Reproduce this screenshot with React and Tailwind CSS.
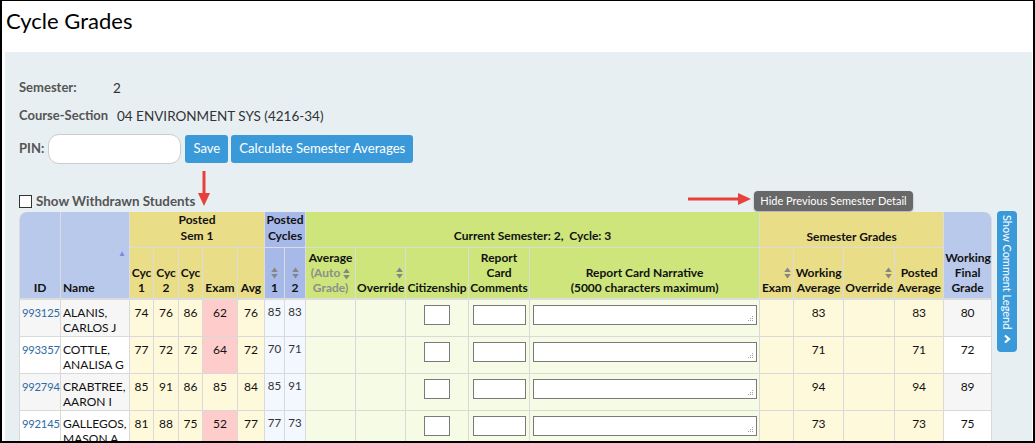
import React from 'react'

const rows = [
  { id: '993125', name: ['ALANIS,', 'CARLOS J'], sem: [74, 76, 86], exam: 62, low: true, avg: 76, p: [85, 83], wavg: 83, pavg: 83, wfg: 80 },
  { id: '993357', name: ['COTTLE,', 'ANALISA G'], sem: [77, 72, 72], exam: 64, low: true, avg: 72, p: [70, 71], wavg: 71, pavg: 71, wfg: 72 },
  { id: '992794', name: ['CRABTREE,', 'AARON I'], sem: [85, 91, 86], exam: 85, low: false, avg: 84, p: [85, 91], wavg: 94, pavg: 94, wfg: 89 },
  { id: '992145', name: ['GALLEGOS,', 'MASON A'], sem: [81, 88, 75], exam: 52, low: true, avg: 77, p: [77, 73], wavg: 73, pavg: 73, wfg: 75 },
]

const Sort = () => (
  <svg width="7" height="12" viewBox="0 0 7 12" className="inline-block">
    <path d="M3.5 0.5L6.8 5H0.2z M3.5 11.5L0.2 7H6.8z" fill="#868686" />
  </svg>
)

const Grip = () => (
  <svg width="7" height="7" viewBox="0 0 7 7" className="absolute right-[2px] bottom-[2px]">
    <g fill="#a0a0a0">
      <rect x="5" y="1" width="1" height="1" />
      <rect x="3" y="3" width="1" height="1" />
      <rect x="5" y="3" width="1" height="1" />
      <rect x="1" y="5" width="1" height="1" />
      <rect x="3" y="5" width="1" height="1" />
      <rect x="5" y="5" width="1" height="1" />
    </g>
  </svg>
)

const th = 'border-r border-b border-[#dcdcdc] font-bold text-[12px] leading-[15px] text-[#111] align-bottom px-[1px] pb-[3px]'
// base cell without font size / colour so each cell can set its own
const cell = 'border-r border-b border-[#d9d9d9] align-top leading-[15px]'
const td = `${cell} pt-[5px] text-[12px] text-[#111]`

export default function App() {
  return (
    <div className="relative w-[1035px] h-[443px] overflow-hidden border-t border-l-2 border-r-2 border-b-2 border-black bg-white font-['Lato',sans-serif]">
      <div className="h-[51px] px-[4px] pt-[6px]">
        <h1 className="text-[22px] leading-[28px] text-black">Cycle Grades</h1>
      </div>

      <div className="ml-[3px] mr-[1px] h-full bg-[#e7eff2] pl-[14px] pt-[26px]">
        <div className="flex h-[20px] items-center">
          <span className="w-[94px] text-[13px] font-bold text-[#555]">Semester:</span>
          <span className="text-[13.5px] text-[#333]">2</span>
        </div>
        <div className="mt-[8px] flex h-[20px] items-center">
          <span className="w-[98px] text-[13px] font-bold text-[#555]">Course-Section</span>
          <span className="text-[13.5px] text-[#333]">04 ENVIRONMENT SYS (4216-34)</span>
        </div>
        <div className="mt-[8px] flex items-center">
          <span className="text-[13px] font-bold text-[#555]">PIN:</span>
          <div className="ml-[4px] h-[30px] w-[133px] rounded-[11px] border border-[#ccc] bg-white" />
          <button className="ml-[4px] h-[28px] w-[43px] rounded-[3px] bg-[#3a9ad9] text-[13px] text-white">Save</button>
          <button className="ml-[3px] h-[28px] w-[182px] rounded-[3px] bg-[#3a9ad9] text-[13.2px] text-white">Calculate Semester Averages</button>
        </div>

        <div className="mt-[27px] flex h-[21px] w-[973px] items-start">
          <div className="mt-[3px] flex items-center">
            <span className="h-[13px] w-[13px] border border-[#333] bg-white" />
            <span className="ml-[4px] text-[13.4px] leading-[14px] font-bold text-[#555]">Show Withdrawn Students</span>
          </div>
          <button className="ml-auto mr-[79px] h-[20px] w-[159px] rounded-[4px] bg-[#686868] text-[11px] text-white shadow-[0_1px_2px_rgba(0,0,0,0.3)]">
            Hide Previous Semester Detail
          </button>
        </div>

        <div className="flex items-start">
          <table className="w-[973px] table-fixed border-separate border-spacing-0">
            <colgroup>
              <col className="w-[42px]" />
              <col className="w-[69px]" />
              <col className="w-[24px]" />
              <col className="w-[25px]" />
              <col className="w-[24px]" />
              <col className="w-[35px]" />
              <col className="w-[27px]" />
              <col className="w-[20px]" />
              <col className="w-[21px]" />
              <col className="w-[50px]" />
              <col className="w-[50px]" />
              <col className="w-[63px]" />
              <col className="w-[61px]" />
              <col className="w-[230px]" />
              <col className="w-[34px]" />
              <col className="w-[50px]" />
              <col className="w-[51px]" />
              <col className="w-[49px]" />
              <col className="w-[48px]" />
            </colgroup>
            <thead>
              <tr className="h-[36px]">
                <th rowSpan={2} className={`${th} border-l rounded-tl-[8px] bg-[#b9c9ec] text-center border-b-2`}>ID</th>
                <th rowSpan={2} className={`${th} relative bg-[#b9c9ec] text-left pl-[2px] border-b-2`}>
                  Name
                  <span className="absolute right-[3px] top-[37px] text-[8px] leading-[8px] text-[#7c88e0]">▲</span>
                </th>
                <th colSpan={5} className={`${th} bg-[#eadd88] text-center leading-[16px]`}>Posted<br />Sem 1</th>
                <th colSpan={2} className={`${th} bg-[#a6b9e8] text-center leading-[16px]`}>Posted<br />Cycles</th>
                <th colSpan={5} className={`${th} bg-[#cde57b] text-center pb-[4px]`}>Current Semester: 2,&nbsp; Cycle: 3</th>
                <th colSpan={4} className={`${th} bg-[#eadd88] text-center pb-[3px]`}>Semester Grades</th>
                <th rowSpan={2} className={`${th} rounded-tr-[8px] bg-[#b9c9ec] text-center border-b-2`}>Working<br />Final<br />Grade</th>
              </tr>
              <tr className="h-[52px]">
                <th className={`${th} bg-[#eadd88] text-center border-b-2`}>Cyc<br />1</th>
                <th className={`${th} bg-[#eadd88] text-center border-b-2`}>Cyc<br />2</th>
                <th className={`${th} bg-[#eadd88] text-center border-b-2`}>Cyc<br />3</th>
                <th className={`${th} bg-[#eadd88] text-center border-b-2`}>Exam</th>
                <th className={`${th} bg-[#eadd88] text-center border-b-2`}>Avg</th>
                <th className={`${th} bg-[#a6b9e8] text-center border-b-2`}>
                  <div className="flex h-[15px] items-center justify-center"><Sort /></div>1
                </th>
                <th className={`${th} bg-[#a6b9e8] text-center border-b-2`}>
                  <div className="flex h-[15px] items-center justify-center"><Sort /></div>2
                </th>
                <th className={`${th} bg-[#cde57b] text-center border-b-2`}>
                  Average<br />
                  <span className="text-[#8e8e8e]">(Auto </span><Sort /><br />
                  <span className="text-[#8e8e8e]">Grade)</span>
                </th>
                <th className={`${th} bg-[#cde57b] text-center border-b-2`}>
                  <div className="flex h-[15px] items-center justify-end pr-[1px]"><Sort /></div>Override
                </th>
                <th className={`${th} bg-[#cde57b] text-center border-b-2`}>Citizenship</th>
                <th className={`${th} bg-[#cde57b] text-center border-b-2`}>Report<br />Card<br />Comments</th>
                <th className={`${th} bg-[#cde57b] text-center border-b-2`}>Report Card Narrative<br />(5000 characters maximum)</th>
                <th className={`${th} bg-[#eadd88] text-center border-b-2`}>
                  <div className="flex h-[15px] items-center justify-end pr-[1px]"><Sort /></div>Exam
                </th>
                <th className={`${th} bg-[#eadd88] text-center border-b-2`}>Working<br />Average</th>
                <th className={`${th} bg-[#eadd88] text-center border-b-2`}>
                  <div className="flex h-[15px] items-center justify-end pr-[1px]"><Sort /></div>Override
                </th>
                <th className={`${th} bg-[#eadd88] text-center border-b-2`}>Posted<br />Average</th>
              </tr>
            </thead>
            <tbody>
              {rows.map((r, i) => {
                const shade = i % 2 === 0 ? 'bg-[#f6f6f6]' : 'bg-white'
                return (
                  <tr key={r.id} className="h-[37px]">
                    <td className={`${cell} border-l ${shade} pt-[5px] pl-[2px] text-[11.2px] tracking-[-0.2px] text-[#2e6aa3]`}>{r.id}</td>
                    <td className={`${td} ${shade} pl-[2px]`}>{r.name[0]}<br />{r.name[1]}</td>
                    {r.sem.map((v, k) => (
                      <td key={k} className={`${td} bg-[#fff9dc] text-center`}>{v}</td>
                    ))}
                    <td className={`${td} ${r.low ? 'bg-[#ffcccc]' : 'bg-[#fff9dc]'} text-center`}>{r.exam}</td>
                    <td className={`${td} bg-[#fff9dc] text-center`}>{r.avg}</td>
                    <td className={`${cell} bg-[#f3f7ff] text-center pt-[4px] text-[11.5px] text-[#333]`}>{r.p[0]}</td>
                    <td className={`${cell} bg-[#f3f7ff] text-center pt-[4px] text-[11.5px] text-[#333]`}>{r.p[1]}</td>
                    <td className={`${td} bg-[#f6fbe6]`} />
                    <td className={`${td} bg-[#f6fbe6]`} />
                    <td className={`${td} bg-[#f6fbe6]`}>
                      <div className="mx-auto h-[20px] w-[26px] border border-[#7a7a7a] bg-white" />
                    </td>
                    <td className={`${td} bg-[#f6fbe6]`}>
                      <div className="mx-auto h-[20px] w-[53px] border border-[#7a7a7a] bg-white" />
                    </td>
                    <td className={`${td} bg-[#f6fbe6] pl-[3px] pr-[2px]`}>
                      <div className="relative h-[20px] border border-[#7a7a7a] bg-white"><Grip /></div>
                    </td>
                    <td className={`${td} bg-[#fff9dc]`} />
                    <td className={`${td} bg-[#fff9dc] text-center`}>{r.wavg}</td>
                    <td className={`${td} bg-[#fff9dc]`} />
                    <td className={`${td} bg-[#fff9dc] text-center`}>{r.pavg}</td>
                    <td className={`${td} ${shade} text-center`}>{r.wfg}</td>
                  </tr>
                )
              })}
            </tbody>
          </table>

          <div className="ml-[5px] -mt-[1px] flex h-[141px] w-[20px] flex-col items-center rounded-[4px] bg-[#3a9ad9] pt-[4px] text-white">
            <span className="text-[11px] leading-[20px] [writing-mode:vertical-rl]">Show Comment Legend</span>
            <svg width="10" height="10" viewBox="0 0 10 10" className="mt-[5px]">
              <path d="M3 1.5L7 5L3 8.5" fill="none" stroke="white" strokeWidth="2.2" />
            </svg>
          </div>
        </div>
      </div>

      {/* annotation arrows */}
      <svg className="absolute left-[190px] top-[168px]" width="24" height="40" viewBox="0 0 24 40">
        <line x1="12" y1="2" x2="12" y2="26" stroke="#e8403b" strokeWidth="3" />
        <path d="M6 24L18 24L12 37z" fill="#e8403b" />
      </svg>
      <svg className="absolute left-[683px] top-[189px]" width="70" height="20" viewBox="0 0 70 20">
        <line x1="3" y1="9" x2="56" y2="9" stroke="#e8403b" strokeWidth="3" />
        <path d="M53 3L66 9L53 15z" fill="#e8403b" />
      </svg>
    </div>
  )
}
